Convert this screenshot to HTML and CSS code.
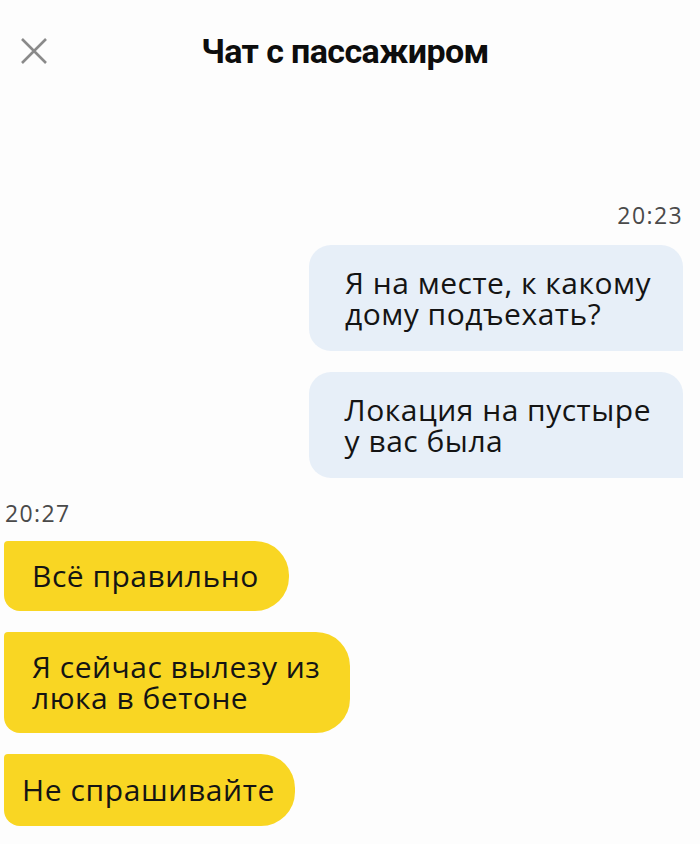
FILE: index.html
```html
<!DOCTYPE html>
<html lang="ru">
<head>
<meta charset="utf-8">
<title>Чат с пассажиром</title>
<link rel="stylesheet" href="styles.css">
</head>
<body>
<div class="screen">
  <header class="header">
    <button class="close" aria-label="Закрыть">
      <svg width="26" height="26" viewBox="0 0 26 26"><path d="M1 1 L25 25 M25 1 L1 25" stroke="#8a8a8a" stroke-width="2.6" fill="none"/></svg>
    </button>
    <h1 class="title">Чат с пассажиром</h1>
  </header>
  <main class="chat">
    <div class="time time-out">20:23</div>
    <div class="bubble out">Я на месте, к какому<br>дому подъехать?</div>
    <div class="bubble out">Локация на пустыре<br>у вас была</div>
    <div class="time time-in">20:27</div>
    <div class="bubble in">Всё правильно</div>
    <div class="bubble in">Я сейчас вылезу из<br>люка в бетоне</div>
    <div class="bubble in in-tight">Не спрашивайте</div>
  </main>
</div>
</body>
</html>
```
FILE: styles.css
```css
* { box-sizing: border-box; }
html, body { margin: 0; padding: 0; background: #fdfdfd; }
body { font-family: "Open Sans", "Noto Sans", sans-serif; color: #141414; }
.screen { width: 700px; height: 844px; overflow: hidden; }
.header {
  position: relative;
  height: 100px;
  display: flex;
  align-items: center;
  justify-content: center;
}
.close {
  position: absolute;
  left: 21px;
  top: 38px;
  width: 26px;
  height: 26px;
  padding: 0;
  border: 0;
  background: none;
  display: block;
}
.close svg { display: block; }
.title {
  margin: 2px 0 0 -10px;
  font-family: Roboto, "Liberation Sans", sans-serif;
  font-weight: 700;
  font-size: 34px;
  letter-spacing: -0.6px;
  color: #0d0d0d;
}
.chat {
  display: flex;
  flex-direction: column;
  padding: 0 17px 0 4px;
}
.time {
  font-size: 23px;
  line-height: 24px;
  letter-spacing: 1.4px;
  color: #4a4a4a;
}
.time-out { align-self: flex-end; margin-top: 103px; margin-right: 0; }
.time-in { align-self: flex-start; margin-top: 23px; margin-left: 1px; }
.bubble {
  width: fit-content;
  font-size: 30px;
  line-height: 31px;
  letter-spacing: 0.5px;
}
.out {
  align-self: flex-end;
  background: #e7eff8;
  border-radius: 22px 22px 0 22px;
  margin-top: 21px;
  padding: 22px 32px 22px 36px;
}
.time-out + .out { margin-top: 18px; }
.in {
  align-self: flex-start;
  background: #f9d623;
  border-radius: 4px 34px 34px 16px;
  margin-top: 21px;
  padding: 19px 30px 20px 28px;
}
.in-tight { padding: 20px 20px 21px 18px; letter-spacing: 0.6px; }
.time-in + .in { margin-top: 16px; }
```
